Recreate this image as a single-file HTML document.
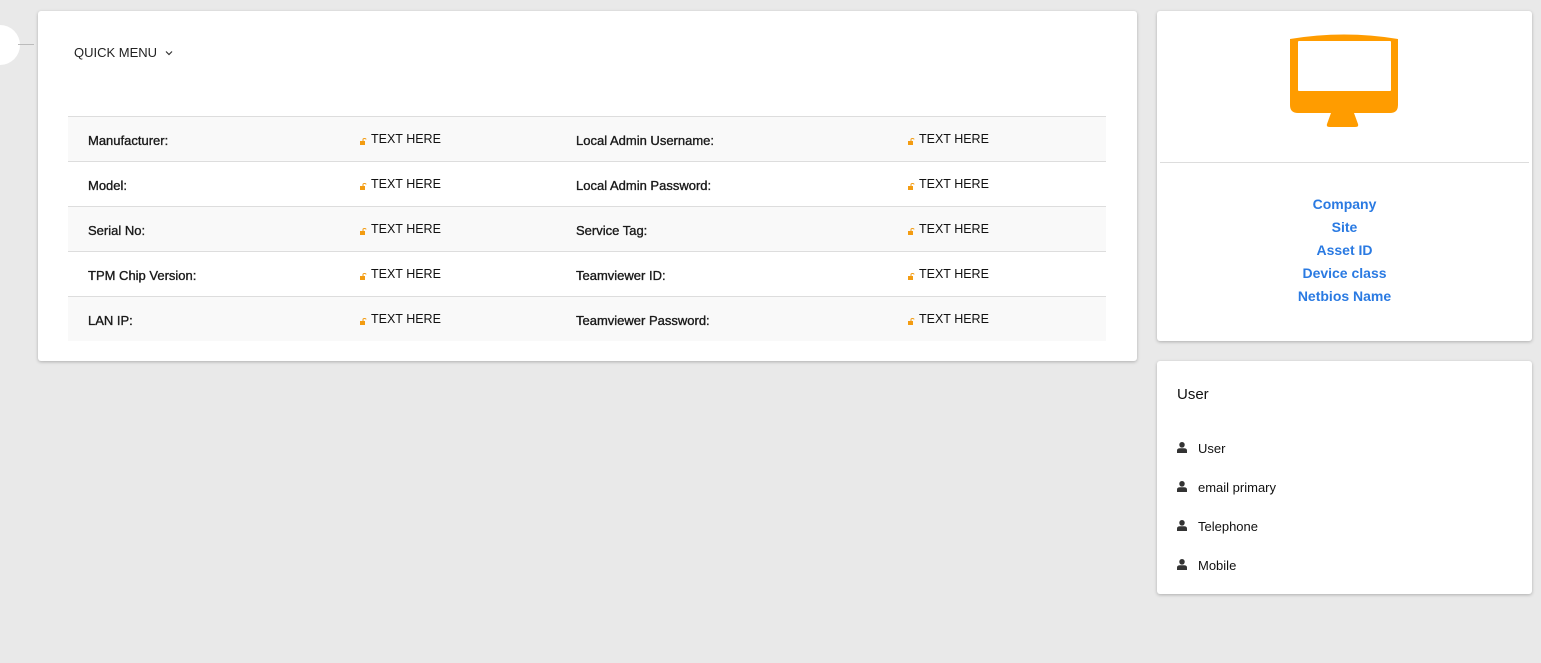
<!DOCTYPE html>
<html><head><meta charset="utf-8"><style>
*{box-sizing:border-box;margin:0;padding:0}
body{width:1541px;height:663px;background:#e9e9e9;font-family:"Liberation Sans",sans-serif;color:#111;position:relative;overflow:hidden}
.card{position:absolute;background:#fff;border-radius:3px;box-shadow:0 1px 3px rgba(0,0,0,.25)}
.row{position:absolute;left:30px;width:1038px;height:45px;border-top:1px solid #ddd;font-size:13px}
.row.odd{background:#f9f9f9}
.row span{position:absolute;top:15px;white-space:nowrap}
.lab{color:#1a1a1a;-webkit-text-stroke:0.35px #1a1a1a;top:16px!important}
.val{font-size:12.5px;padding-left:11px}
.val svg{position:absolute;left:0;top:6px}
.links a{display:block;color:#2a7ae2;font-weight:bold;font-size:14px;text-decoration:none;line-height:23px}
.u{position:absolute;left:20px;font-size:13px}
.u svg{position:absolute;left:0;top:1px}
.u span{position:absolute;left:21px;white-space:nowrap}
</style></head><body>
<div style="position:absolute;left:-20px;top:25px;width:40px;height:40px;border-radius:50%;background:#fff"></div>
<div style="position:absolute;left:18px;top:44px;width:16px;height:1px;background:#bbb"></div>
<div class="card" style="left:38px;top:11px;width:1099px;height:350px">
 <div style="position:absolute;left:36px;top:34px;font-size:13px;color:#222">QUICK MENU <svg width="8" height="6" style="margin-left:4px;vertical-align:1px" viewBox="0 0 8 6"><path d="M1 1.5 L4 4.5 L7 1.5" stroke="#333" stroke-width="1.2" fill="none"/></svg></div>
 <div class="row odd" style="top:105px"><span class="lab" style="left:20px">Manufacturer:</span><span class="val" style="left:292px"><svg width="7" height="7" viewBox="0 0 7 7"><rect x="0" y="3" width="5" height="4" fill="#f39c12"/><path d="M3 3 V1.5 Q3 0.5 4.5 0.5 Q6 0.5 6 1.5" stroke="#f39c12" fill="none"/></svg>TEXT HERE</span><span class="lab" style="left:508px">Local Admin Username:</span><span class="val" style="left:840px"><svg width="7" height="7" viewBox="0 0 7 7"><rect x="0" y="3" width="5" height="4" fill="#f39c12"/><path d="M3 3 V1.5 Q3 0.5 4.5 0.5 Q6 0.5 6 1.5" stroke="#f39c12" fill="none"/></svg>TEXT HERE</span></div>
 <div class="row" style="top:150px"><span class="lab" style="left:20px">Model:</span><span class="val" style="left:292px"><svg width="7" height="7" viewBox="0 0 7 7"><rect x="0" y="3" width="5" height="4" fill="#f39c12"/><path d="M3 3 V1.5 Q3 0.5 4.5 0.5 Q6 0.5 6 1.5" stroke="#f39c12" fill="none"/></svg>TEXT HERE</span><span class="lab" style="left:508px">Local Admin Password:</span><span class="val" style="left:840px"><svg width="7" height="7" viewBox="0 0 7 7"><rect x="0" y="3" width="5" height="4" fill="#f39c12"/><path d="M3 3 V1.5 Q3 0.5 4.5 0.5 Q6 0.5 6 1.5" stroke="#f39c12" fill="none"/></svg>TEXT HERE</span></div>
 <div class="row odd" style="top:195px"><span class="lab" style="left:20px">Serial No:</span><span class="val" style="left:292px"><svg width="7" height="7" viewBox="0 0 7 7"><rect x="0" y="3" width="5" height="4" fill="#f39c12"/><path d="M3 3 V1.5 Q3 0.5 4.5 0.5 Q6 0.5 6 1.5" stroke="#f39c12" fill="none"/></svg>TEXT HERE</span><span class="lab" style="left:508px">Service Tag:</span><span class="val" style="left:840px"><svg width="7" height="7" viewBox="0 0 7 7"><rect x="0" y="3" width="5" height="4" fill="#f39c12"/><path d="M3 3 V1.5 Q3 0.5 4.5 0.5 Q6 0.5 6 1.5" stroke="#f39c12" fill="none"/></svg>TEXT HERE</span></div>
 <div class="row" style="top:240px"><span class="lab" style="left:20px">TPM Chip Version:</span><span class="val" style="left:292px"><svg width="7" height="7" viewBox="0 0 7 7"><rect x="0" y="3" width="5" height="4" fill="#f39c12"/><path d="M3 3 V1.5 Q3 0.5 4.5 0.5 Q6 0.5 6 1.5" stroke="#f39c12" fill="none"/></svg>TEXT HERE</span><span class="lab" style="left:508px">Teamviewer ID:</span><span class="val" style="left:840px"><svg width="7" height="7" viewBox="0 0 7 7"><rect x="0" y="3" width="5" height="4" fill="#f39c12"/><path d="M3 3 V1.5 Q3 0.5 4.5 0.5 Q6 0.5 6 1.5" stroke="#f39c12" fill="none"/></svg>TEXT HERE</span></div>
 <div class="row odd" style="top:285px"><span class="lab" style="left:20px">LAN IP:</span><span class="val" style="left:292px"><svg width="7" height="7" viewBox="0 0 7 7"><rect x="0" y="3" width="5" height="4" fill="#f39c12"/><path d="M3 3 V1.5 Q3 0.5 4.5 0.5 Q6 0.5 6 1.5" stroke="#f39c12" fill="none"/></svg>TEXT HERE</span><span class="lab" style="left:508px">Teamviewer Password:</span><span class="val" style="left:840px"><svg width="7" height="7" viewBox="0 0 7 7"><rect x="0" y="3" width="5" height="4" fill="#f39c12"/><path d="M3 3 V1.5 Q3 0.5 4.5 0.5 Q6 0.5 6 1.5" stroke="#f39c12" fill="none"/></svg>TEXT HERE</span></div>
</div>
<div class="card" style="left:1157px;top:11px;width:375px;height:330px">
 <svg style="position:absolute;left:133px;top:22px" width="108" height="95" viewBox="0 0 108 95">
  <path d="M0 6 Q54 -3 108 6 L108 72 Q108 80 100 80 L64 80 L68 91 Q69 94 65 94 L40 94 Q36 94 37 91 L41 80 L8 80 Q0 80 0 72 Z" fill="#ff9c00"/>
  <rect x="8" y="8" width="93" height="50" fill="#fff" rx="1"/>
 </svg>
 <div style="position:absolute;left:3px;top:151px;width:369px;height:1px;background:#ddd"></div>
 <div class="links" style="position:absolute;left:0;top:182px;width:375px;text-align:center"><a>Company</a><a>Site</a><a>Asset ID</a><a>Device class</a><a>Netbios Name</a></div>
</div>
<div class="card" style="left:1157px;top:361px;width:375px;height:233px">
 <div style="position:absolute;left:20px;top:25px;font-size:15px">User</div>
 <div class="u" style="top:80px"><svg width="10" height="11" viewBox="0 0 10 11"><rect x="2.3" y="0" width="5.4" height="5.6" rx="2.6" fill="#333"/><path d="M0 11 V8.5 Q0 6.2 3 6.2 H7 Q10 6.2 10 8.5 V11Z" fill="#333"/></svg><span>User</span></div>
 <div class="u" style="top:119px"><svg width="10" height="11" viewBox="0 0 10 11"><rect x="2.3" y="0" width="5.4" height="5.6" rx="2.6" fill="#333"/><path d="M0 11 V8.5 Q0 6.2 3 6.2 H7 Q10 6.2 10 8.5 V11Z" fill="#333"/></svg><span>email primary</span></div>
 <div class="u" style="top:158px"><svg width="10" height="11" viewBox="0 0 10 11"><rect x="2.3" y="0" width="5.4" height="5.6" rx="2.6" fill="#333"/><path d="M0 11 V8.5 Q0 6.2 3 6.2 H7 Q10 6.2 10 8.5 V11Z" fill="#333"/></svg><span>Telephone</span></div>
 <div class="u" style="top:197px"><svg width="10" height="11" viewBox="0 0 10 11"><rect x="2.3" y="0" width="5.4" height="5.6" rx="2.6" fill="#333"/><path d="M0 11 V8.5 Q0 6.2 3 6.2 H7 Q10 6.2 10 8.5 V11Z" fill="#333"/></svg><span>Mobile</span></div>
</div>
</body></html>
